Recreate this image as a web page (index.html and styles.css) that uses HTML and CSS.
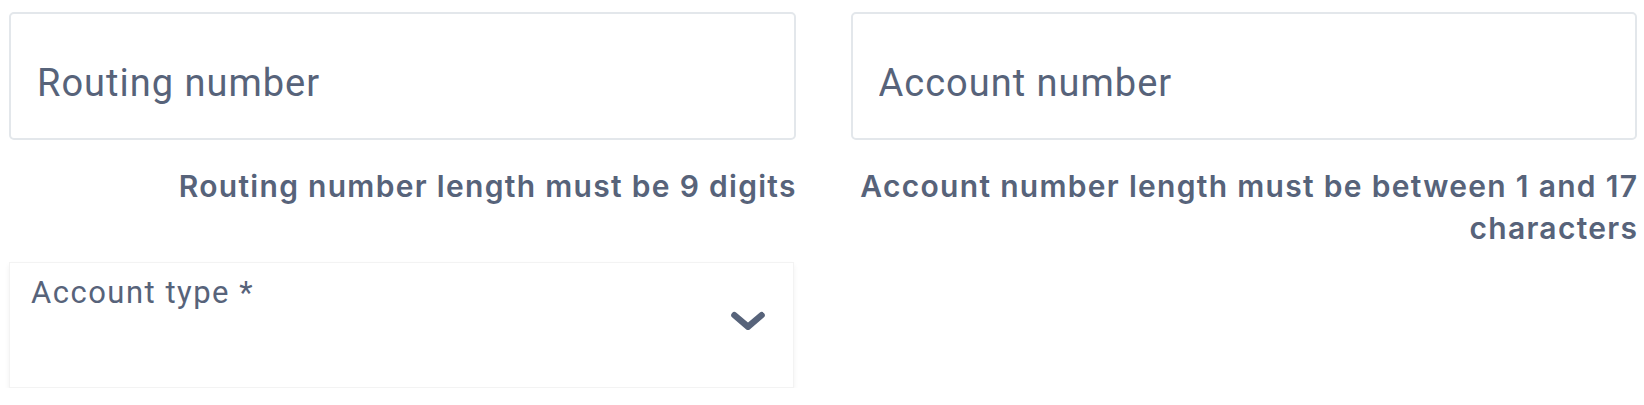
FILE: index.html
```html
<!DOCTYPE html>
<html lang="en">
<head>
<meta charset="utf-8">
<title>Bank account</title>
<link rel="stylesheet" href="styles.css">
</head>
<body>
<form class="bank-form">
  <div class="col">
    <input class="field" type="text" placeholder="Routing number">
    <p class="error">Routing number length must be 9 digits</p>
    <div class="select">
      <span class="select-label">Account type *</span>
      <svg class="chevron" viewBox="0 0 34 20" aria-hidden="true"><path d="M4 4 L17 15 L30 4" fill="none" stroke="currentColor" stroke-width="6" stroke-linecap="round" stroke-linejoin="round"/></svg>
    </div>
  </div>
  <div class="col">
    <input class="field" type="text" placeholder="Account number">
    <p class="error">Account number length must be between 1 and 17 characters</p>
  </div>
</form>
</body>
</html>
```
FILE: styles.css
```css
html, body {
  margin: 0;
  background: #ffffff;
}
body {
  font-family: Roboto, "Liberation Sans", sans-serif;
  color: #57637a;
}
.bank-form {
  display: grid;
  grid-template-columns: 1fr 1fr;
  column-gap: 55px;
  padding: 12px 7px 0 9px;
}
.col {
  display: flex;
  flex-direction: column;
  min-width: 0;
}
.field {
  box-sizing: border-box;
  width: 100%;
  height: 128px;
  margin: 0;
  padding: 14px 26px 0 26px;
  border: 2px solid #e3e7eb;
  border-radius: 5px;
  background: #fff;
  font-family: inherit;
  font-size: 38px;
  letter-spacing: 1px;
  color: #57637a;
  outline: none;
}
.field::placeholder {
  color: #57637a;
  opacity: 1;
}
.error {
  margin: 25px -1.3px 0 0;
  font-family: Inter, Roboto, sans-serif;
  font-size: 30px;
  font-weight: 600;
  line-height: 42px;
  letter-spacing: 1.3px;
  text-align: right;
}
.select {
  box-sizing: border-box;
  position: relative;
  height: 126px;
  margin-top: 55px;
  margin-right: 2px;
  padding: 12px 21px;
  border: 1px solid #f3f3f3;
  background: #fff;
  box-shadow: 0 3px 5px rgba(0, 0, 0, 0.06);
}
.select-label {
  display: block;
  font-size: 31px;
  line-height: 36px;
  letter-spacing: 1.5px;
}
.chevron {
  position: absolute;
  right: 27px;
  top: 48px;
  width: 36px;
  height: 21px;
  color: #57637a;
}
```
